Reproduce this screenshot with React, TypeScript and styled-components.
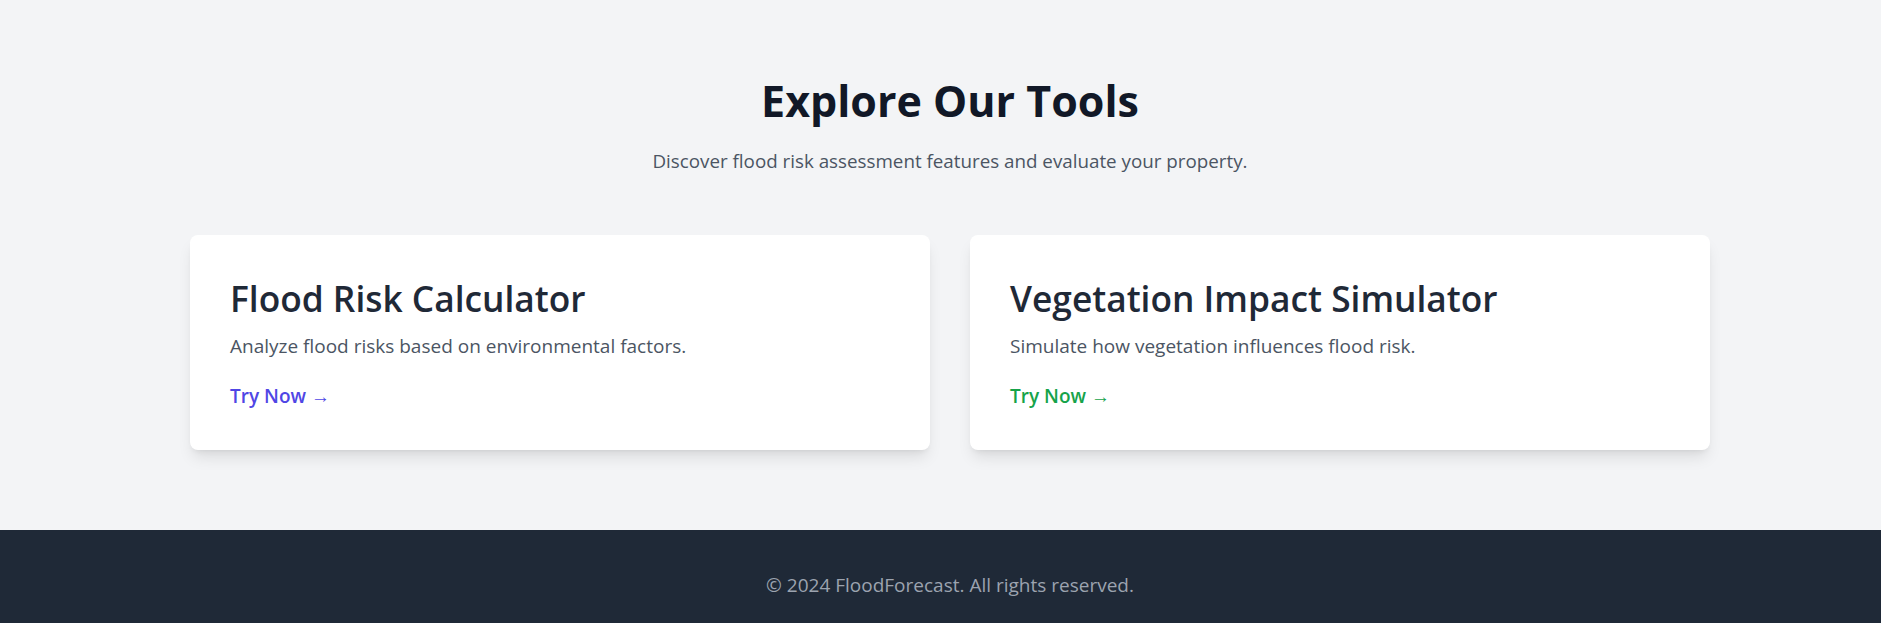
import React from "react";
import styled, { createGlobalStyle } from "styled-components";

const GlobalStyle = createGlobalStyle`
  html, body {
    margin: 0;
    padding: 0;
    background: #f3f4f6;
    font-family: "Open Sans", "Noto Sans", "DejaVu Sans", sans-serif;
  }
  * { box-sizing: border-box; }
`;

const Page = styled.div`
  display: flex;
  flex-direction: column;
  min-height: 100vh;
`;

const ToolsSection = styled.section`
  padding: 77px 0 80px 19px;
  background: #f3f4f6;
`;

const Container = styled.div`
  width: 1520px;
  margin: 0 auto;
  display: flex;
  flex-direction: column;
  align-items: center;
`;

const Heading = styled.h2`
  margin: 0;
  font-size: 43px;
  line-height: 48px;
  font-weight: 700;
  color: #111827;
  text-align: center;
`;

const Subheading = styled.p`
  margin: 22px 0 0;
  font-size: 18.8px;
  line-height: 28px;
  color: #4b5563;
  text-align: center;
`;

const CardGrid = styled.div`
  margin-top: 60px;
  width: 100%;
  display: grid;
  grid-template-columns: 1fr 1fr;
  gap: 40px;
`;

const Card = styled.div`
  background: #ffffff;
  border-radius: 8px;
  padding: 43px 40px 40px;
  box-shadow: 0 10px 15px -3px rgba(0, 0, 0, 0.1),
    0 4px 6px -4px rgba(0, 0, 0, 0.1);
  display: flex;
  flex-direction: column;
  align-items: flex-start;
`;

const CardTitle = styled.h3`
  margin: 0;
  font-size: 35.3px;
  line-height: 40px;
  font-weight: 600;
  color: #1f2937;
`;

const CardText = styled.p`
  margin: 14px 0 0;
  font-size: 19px;
  line-height: 28px;
  color: #4b5563;
`;

const TryLink = styled.a<{ $tone: "indigo" | "green" }>`
  margin-top: 22px;
  height: 28px;
  font-size: 19px;
  line-height: 28px;
  font-weight: 600;
  text-decoration: none;
  color: ${(p) => (p.$tone === "indigo" ? "#4f46e5" : "#16a34a")};
  cursor: pointer;
`;

const Arrow = styled.span`
  font-family: "Liberation Sans", "DejaVu Sans", sans-serif;
  font-weight: 400;
  line-height: 1;
`;

const Footer = styled.footer`
  background: #1f2937;
  padding: 41px 0 42px 19px;
  display: flex;
  justify-content: center;
`;

const FooterText = styled.p`
  margin: 0;
  font-size: 19px;
  line-height: 28px;
  color: #9ca3af;
  text-align: center;
`;

const tools = [
  {
    title: "Flood Risk Calculator",
    text: "Analyze flood risks based on environmental factors.",
    tone: "indigo" as const,
  },
  {
    title: "Vegetation Impact Simulator",
    text: "Simulate how vegetation influences flood risk.",
    tone: "green" as const,
  },
];

export default function App() {
  return (
    <>
      <GlobalStyle />
      <Page>
        <ToolsSection>
          <Container>
            <Heading>Explore Our Tools</Heading>
            <Subheading>
              Discover flood risk assessment features and evaluate your property.
            </Subheading>
            <CardGrid>
              {tools.map((t) => (
                <Card key={t.title}>
                  <CardTitle>{t.title}</CardTitle>
                  <CardText>{t.text}</CardText>
                  <TryLink $tone={t.tone}>
                    Try Now <Arrow>→</Arrow>
                  </TryLink>
                </Card>
              ))}
            </CardGrid>
          </Container>
        </ToolsSection>
        <Footer>
          <FooterText>© 2024 FloodForecast. All rights reserved.</FooterText>
        </Footer>
      </Page>
    </>
  );
}
